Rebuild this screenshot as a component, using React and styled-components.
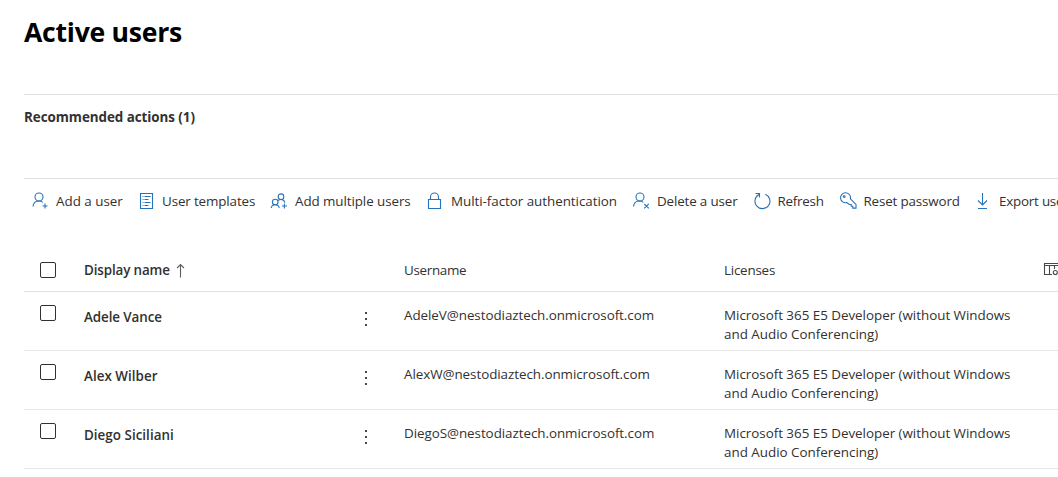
import React from "react";
import styled, { createGlobalStyle } from "styled-components";

const GlobalStyle = createGlobalStyle`
  * { box-sizing: border-box; }
  body {
    margin: 0;
    background: #fff;
    color: #323130;
    font-family: "Segoe UI", "Open Sans", "Noto Sans", sans-serif;
    font-size: 13.4px;
    overflow: hidden;
  }
`;

const Page = styled.main`
  width: 1058px;
  height: 477px;
  padding-left: 24px;
  overflow: hidden;
`;

const Title = styled.h1`
  margin: 0;
  height: 94px;
  padding-top: 14px;
  font-size: 26.6px;
  line-height: 36px;
  font-weight: 700;
  color: #000;
  letter-spacing: -0.26px;
`;

const Recommended = styled.section`
  height: 84px;
  border-top: 1px solid #e1e1e1;
  padding-top: 12px;
  line-height: 20px;
  font-weight: 700;
`;

const Toolbar = styled.div`
  display: flex;
  height: 70px;
  border-top: 1px solid #e1e1e1;
  padding: 12px 0 0 8px;
`;

const Command = styled.button`
  display: flex;
  flex: none;
  align-items: center;
  gap: 8px;
  width: ${(p) => p.$width}px;
  height: 20px;
  padding: 0;
  border: 0;
  background: none;
  color: inherit;
  font: inherit;
  white-space: nowrap;
`;

const Icon = styled.svg`
  display: block;
  flex: none;
  width: 16px;
  height: 18px;
  overflow: visible;
  fill: none;
  stroke: ${(p) => p.$color || "#2672b9"};
  stroke-width: 1.1;
`;

const Label = styled.span`
  white-space: nowrap;
  letter-spacing: ${(p) => p.$spacing || 0}px;
`;

const Row = styled.div`
  display: grid;
  grid-template-columns: 60px 268px 52px 320px 320px 14px;
  height: ${(p) => (p.$header ? 44 : 59)}px;
  border-bottom: 1px solid ${(p) => (p.$header ? "#e1e1e1" : "#e6e6e6")};
`;

const Cell = styled.div`
  padding-top: ${(p) => p.$top}px;
  line-height: 19px;
  font-weight: ${(p) => (p.$strong ? 600 : 400)};
  white-space: nowrap;
`;

const CheckCell = styled.div`
  padding: ${(p) => p.$top}px 0 0 16px;
`;

const Checkbox = styled.span`
  display: block;
  width: 16px;
  height: 16px;
  border: 1px solid #323130;
  border-radius: 2px;
`;

const SortLabel = styled.span`
  display: flex;
  align-items: center;
  gap: 6px;
`;

const MoreButton = styled.div`
  display: flex;
  flex-direction: column;
  gap: 4px;
  padding: 20px 0 0 13px;
`;

const Dot = styled.i`
  width: 2px;
  height: 2px;
  background: #494846;
`;

const drawings = {
  add: (
    <>
      <circle cx="7" cy="5" r="4" />
      <path d="M1 14.5C1.3 11.1 3.7 9 7 9c1.7 0 2.9.5 3.8 1.4M13 11.5v5M10.5 14h5" />
    </>
  ),
  templates: (
    <path d="M2.5 1.5h12v15h-12zM4.5 4.5h1m1 0h6m-8 3h1m1 0h4m-6 3h1m1 0h6m-8 3h1m1 0h4" />
  ),
  multiple: (
    <>
      <circle cx="10" cy="4.7" r="2.8" />
      <circle cx="4.2" cy="10" r="2.8" />
      <path d="M.2 16c.2-2.2 1.8-3.3 4-3.3s3.7 1.1 4 3.3M7 8.7c.8-.8 1.7-1.2 3-1.2 2 0 3.4 1.1 3.9 3M13.4 11.5v5M11 14h5" />
    </>
  ),
  lock: <path d="M1.5 7.5h12v9h-12zM3.5 7.5V5a4 4 0 0 1 8 0v2.5" />,
  remove: (
    <>
      <circle cx="7" cy="5" r="4" />
      <path d="M.5 14.5C.8 11.1 3.2 9 6.5 9c1.7 0 2.9.5 3.8 1.4M11.2 11.8l4.6 4.6m0-4.6l-4.6 4.6" />
    </>
  ),
  refresh: <path d="M11.3 2.2A7.5 7.5 0 1 1 5 2.5M1.5 1.5h4v4" />,
  key: (
    <>
      <path d="M6.8 10.6A5 5 0 1 1 10.4 6.9L16 12.4v3.7h-3.2v-1.8l-1.6-.1v-1.7H9.3z" />
      <circle cx="4.2" cy="4.6" r=".9" />
    </>
  ),
  export: <path d="M7.5 1v12M3 8.5l4.5 4.5L12 8.5M3 16.5h9" />,
};

const commands = [
  { icon: "add", text: "Add a user", width: 106 },
  { icon: "templates", text: "User templates", width: 133, spacing: -0.13 },
  { icon: "multiple", text: "Add multiple users", width: 156, spacing: -0.08 },
  { icon: "lock", text: "Multi-factor authentication", width: 206, spacing: -0.04 },
  { icon: "remove", text: "Delete a user", width: 120.5, spacing: -0.15 },
  { icon: "refresh", text: "Refresh", width: 86, spacing: -0.24 },
  { icon: "key", text: "Reset password", width: 135.5, spacing: -0.15 },
  { icon: "export", text: "Export users", width: 110, spacing: -0.22 },
];

const users = [
  { name: "Adele Vance", spacing: -0.08, email: "AdeleV@nestodiaztech.onmicrosoft.com" },
  { name: "Alex Wilber", spacing: 0.03, email: "AlexW@nestodiaztech.onmicrosoft.com" },
  { name: "Diego Siciliani", spacing: 0.03, email: "DiegoS@nestodiaztech.onmicrosoft.com" },
];

export default function App() {
  return (
    <Page>
      <GlobalStyle />
      <Title>Active users</Title>
      <Recommended>
        <Label $spacing={-0.05}>Recommended actions (1)</Label>
      </Recommended>
      <Toolbar>
        {commands.map((c) => (
          <Command key={c.text} $width={c.width}>
            <Icon viewBox="0 0 16 18">{drawings[c.icon]}</Icon>
            <Label $spacing={c.spacing}>{c.text}</Label>
          </Command>
        ))}
      </Toolbar>
      <Row $header>
        <CheckCell $top={14}><Checkbox /></CheckCell>
        <Cell $top={13} $strong>
          <SortLabel>
            <Label $spacing={-0.12}>Display name</Label>
            <Icon viewBox="0 0 16 18" $color="#605e5c">
              <path d="M4.5 15.5V2.5M1 6L4.5 2.5 8 6" />
            </Icon>
          </SortLabel>
        </Cell>
        <span />
        <Cell $top={13}><Label $spacing={-0.3}>Username</Label></Cell>
        <Cell $top={13}><Label $spacing={-0.22}>Licenses</Label></Cell>
        <Cell $top={14}>
          <Icon viewBox="0 0 16 18" $color="#49474b">
            <path d="M8 12.5H.5v-11H16M.5 3.5H16M5.5 3.5v9M10.5 3.5V7" />
            <circle cx="11.3" cy="10.5" r="2" />
          </Icon>
        </Cell>
      </Row>
      {users.map((u) => (
        <Row key={u.name}>
          <CheckCell $top={13}><Checkbox /></CheckCell>
          <Cell $top={16} $strong><Label $spacing={u.spacing}>{u.name}</Label></Cell>
          <MoreButton><Dot /><Dot /><Dot /></MoreButton>
          <Cell $top={14}><Label $spacing={-0.05}>{u.email}</Label></Cell>
          <Cell $top={14}>
            <Label $spacing={-0.02}>Microsoft 365 E5 Developer (without Windows</Label>
            <br />
            <Label>and Audio Conferencing)</Label>
          </Cell>
        </Row>
      ))}
    </Page>
  );
}
